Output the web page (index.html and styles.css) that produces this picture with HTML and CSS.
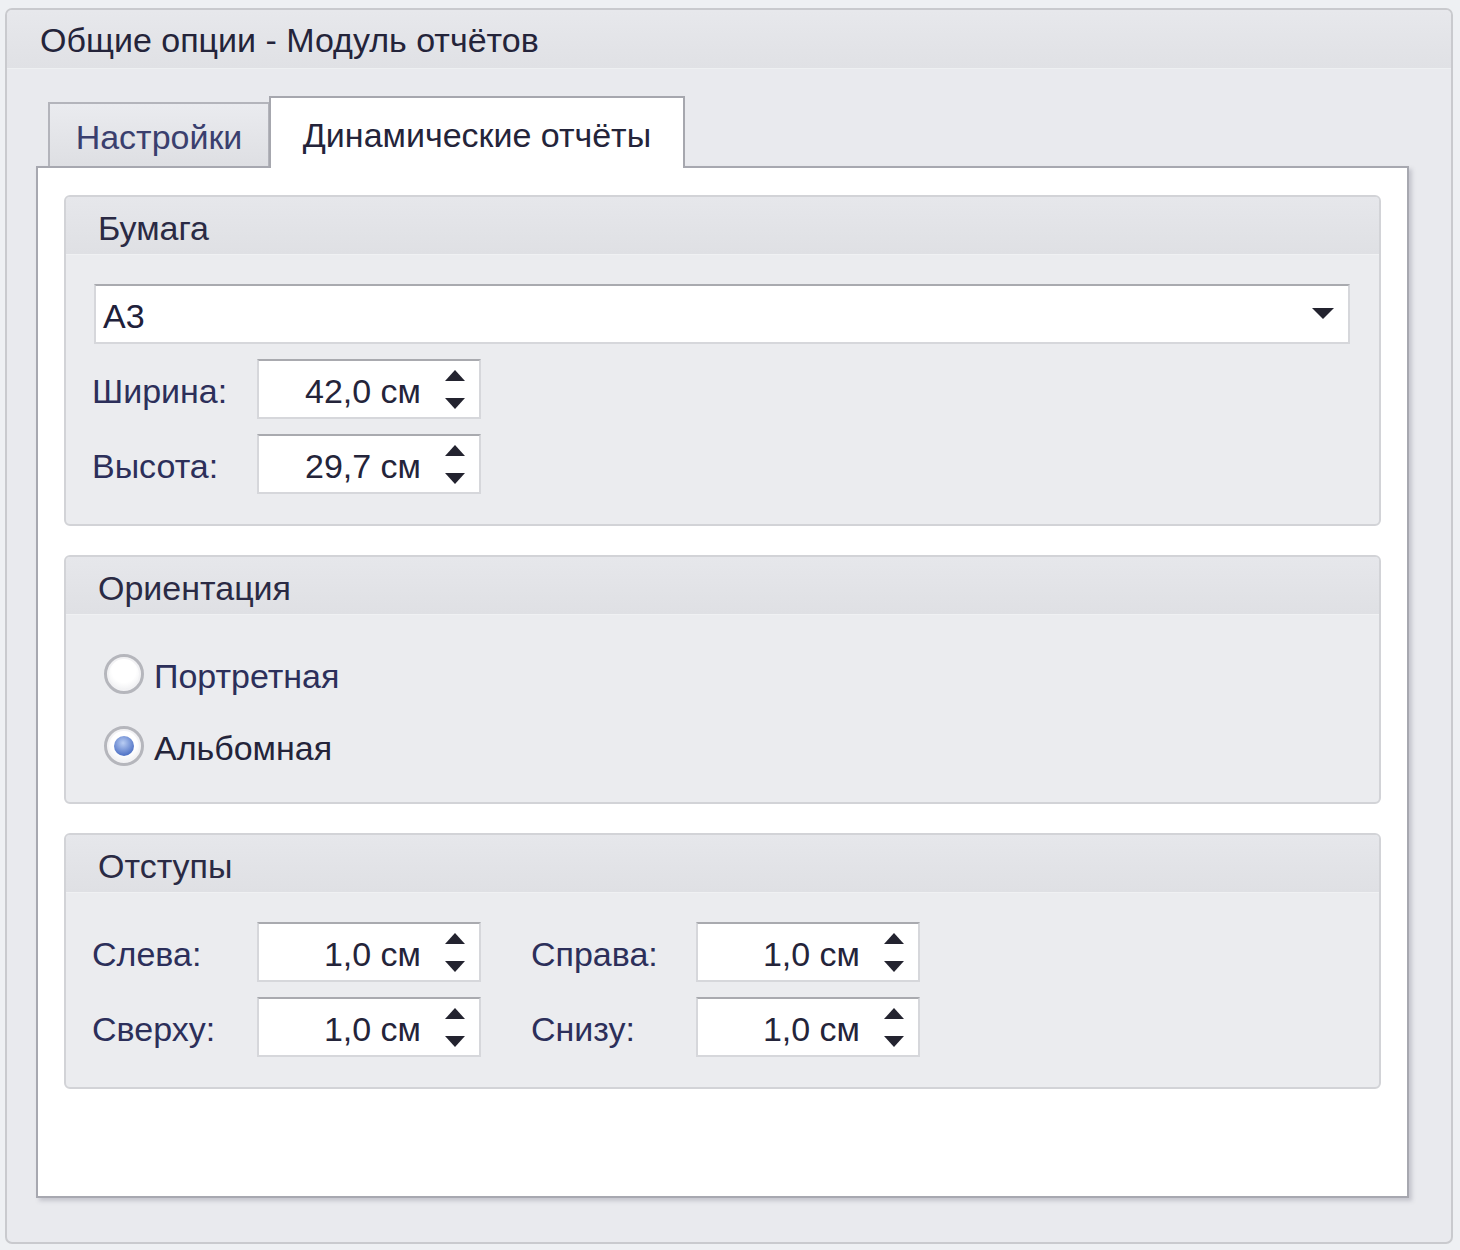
FILE: index.html
```html
<!DOCTYPE html>
<html lang="ru">
<head>
<meta charset="utf-8">
<title>Общие опции - Модуль отчётов</title>
<link rel="stylesheet" href="styles.css">
</head>
<body>
<div class="outer">
  <div class="outer-header"><span class="txt">Общие опции - Модуль отчётов</span></div>
  <div class="outer-body">
    <div class="tabs">
      <div class="tab"><span class="txt">Настройки</span></div>
      <div class="tab active"><span class="txt">Динамические отчёты</span></div>
    </div>
    <div class="page">
      <div class="group g-paper">
        <div class="group-header"><span class="txt">Бумага</span></div>
        <div class="group-body paper-body">
          <div class="combo">
            <span class="txt">A3</span>
            <svg class="combo-arrow" width="22" height="12" viewBox="0 0 22 12"><path d="M0 0 H22 L11 11 Z" fill="#23232f"/></svg>
          </div>
          <div class="field-row">
            <span class="label">Ширина:</span>
            <div class="spin"><span class="spin-val">42,0 см</span>
              <span class="spin-btns">
                <svg width="20" height="11" viewBox="0 0 20 11"><path d="M10 0 L20 11 H0 Z" fill="#23232f"/></svg>
                <svg width="20" height="11" viewBox="0 0 20 11"><path d="M0 0 H20 L10 11 Z" fill="#23232f"/></svg>
              </span>
            </div>
          </div>
          <div class="field-row">
            <span class="label">Высота:</span>
            <div class="spin"><span class="spin-val">29,7 см</span>
              <span class="spin-btns">
                <svg width="20" height="11" viewBox="0 0 20 11"><path d="M10 0 L20 11 H0 Z" fill="#23232f"/></svg>
                <svg width="20" height="11" viewBox="0 0 20 11"><path d="M0 0 H20 L10 11 Z" fill="#23232f"/></svg>
              </span>
            </div>
          </div>
        </div>
      </div>

      <div class="group g-orient">
        <div class="group-header"><span class="txt">Ориентация</span></div>
        <div class="group-body orient-body">
          <div class="radio-row"><span class="radio"></span><span class="txt">Портретная</span></div>
          <div class="radio-row"><span class="radio checked"><span class="dot"></span></span><span class="txt">Альбомная</span></div>
        </div>
      </div>

      <div class="group g-margins">
        <div class="group-header"><span class="txt">Отступы</span></div>
        <div class="group-body margins-body">
          <div class="field-row">
            <span class="label">Слева:</span>
            <div class="spin"><span class="spin-val">1,0 см</span>
              <span class="spin-btns">
                <svg width="20" height="11" viewBox="0 0 20 11"><path d="M10 0 L20 11 H0 Z" fill="#23232f"/></svg>
                <svg width="20" height="11" viewBox="0 0 20 11"><path d="M0 0 H20 L10 11 Z" fill="#23232f"/></svg>
              </span>
            </div>
            <span class="label label2">Справа:</span>
            <div class="spin"><span class="spin-val">1,0 см</span>
              <span class="spin-btns">
                <svg width="20" height="11" viewBox="0 0 20 11"><path d="M10 0 L20 11 H0 Z" fill="#23232f"/></svg>
                <svg width="20" height="11" viewBox="0 0 20 11"><path d="M0 0 H20 L10 11 Z" fill="#23232f"/></svg>
              </span>
            </div>
          </div>
          <div class="field-row">
            <span class="label">Сверху:</span>
            <div class="spin"><span class="spin-val">1,0 см</span>
              <span class="spin-btns">
                <svg width="20" height="11" viewBox="0 0 20 11"><path d="M10 0 L20 11 H0 Z" fill="#23232f"/></svg>
                <svg width="20" height="11" viewBox="0 0 20 11"><path d="M0 0 H20 L10 11 Z" fill="#23232f"/></svg>
              </span>
            </div>
            <span class="label label2">Снизу:</span>
            <div class="spin"><span class="spin-val">1,0 см</span>
              <span class="spin-btns">
                <svg width="20" height="11" viewBox="0 0 20 11"><path d="M10 0 L20 11 H0 Z" fill="#23232f"/></svg>
                <svg width="20" height="11" viewBox="0 0 20 11"><path d="M0 0 H20 L10 11 Z" fill="#23232f"/></svg>
              </span>
            </div>
          </div>
        </div>
      </div>
    </div>
  </div>
</div>
</body>
</html>
```

FILE: styles.css
```css
* { box-sizing: border-box; }

html, body {
  margin: 0;
  padding: 0;
  background: #eef0f3;
}

body {
  font-family: "Liberation Sans", Arial, sans-serif;
  font-size: 34px;
  color: #24243a;
  padding: 8px 0 0 5px;
}

.txt,
.label,
.spin-val {
  padding-top: 5px;
}

.outer {
  width: 1448px;
  height: 1236px;
  border: 2px solid #c9cace;
  border-radius: 7px;
  background: #e9eaee;
  overflow: hidden;
}

.outer-header {
  height: 59px;
  padding-left: 33px;
  display: flex;
  align-items: center;
  background: linear-gradient(#e7e8ec, #e0e1e5);
  border-bottom: 1px solid #eef0f2;
}

.outer-header .txt { padding-top: 2px; }

.outer-body {
  padding: 29px 0 0 29px;
}

.tabs {
  display: flex;
  align-items: flex-end;
  margin-left: 12px;
  height: 68px;
  position: relative;
  z-index: 1;
}

.tab {
  height: 64px;
  width: 222px;
  border: 2px solid #b3b4bb;
  border-bottom: none;
  background: linear-gradient(#eaebef, #dedfe3);
  color: #3a3f6e;
  display: flex;
  align-items: center;
  justify-content: center;
}

.tab.active {
  height: 72px;
  width: 416px;
  margin-bottom: -2px;
  margin-left: -1px;
  background: #ffffff;
  border-color: #a6a7ae;
  color: #24243a;
}

.page {
  width: 1373px;
  height: 1032px;
  background: #ffffff;
  border: 2px solid #a7a8b0;
  box-shadow: 3px 3px 4px rgba(90, 92, 110, 0.25);
  padding: 27px 0 0 26px;
  display: flex;
  flex-direction: column;
  gap: 29px;
}

.group {
  width: 1317px;
  border: 2px solid #d2d3d7;
  border-radius: 6px;
  background: #ebecef;
  overflow: hidden;
  flex: none;
}

.group-header {
  height: 58px;
  padding-left: 32px;
  display: flex;
  align-items: center;
  background: linear-gradient(#e6e7eb, #dfe0e4);
  border-bottom: 1px solid #f0f1f3;
  color: #2a2a44;
}

.g-paper { height: 331px; }
.g-orient { height: 249px; }
.g-margins { height: 256px; }

.paper-body {
  padding: 29px 0 0 28px;
  display: flex;
  flex-direction: column;
  gap: 15px;
}

.combo {
  width: 1256px;
  height: 60px;
  background: #ffffff;
  border: 2px solid #d6d7db;
  border-top-color: #a9aaaf;
  display: flex;
  align-items: center;
  justify-content: space-between;
  padding: 0 14px 0 7px;
  color: #20203a;
}

.combo-arrow { display: block; }

.field-row {
  display: flex;
  align-items: center;
  height: 60px;
  margin-left: -2px;
}

.label {
  width: 165px;
  color: #2c2f5a;
}

.label2 {
  margin-left: 50px;
}

.spin {
  width: 224px;
  height: 60px;
  background: #ffffff;
  border: 2px solid #d6d7db;
  border-top-color: #a9aaaf;
  display: flex;
  align-items: center;
  justify-content: flex-end;
  padding-right: 14px;
}

.spin-val {
  margin-right: 24px;
  color: #24243a;
}

.spin-btns {
  display: flex;
  flex-direction: column;
  gap: 17px;
}

.spin-btns svg { display: block; }

.orient-body {
  padding: 39px 0 0 38px;
  display: flex;
  flex-direction: column;
  gap: 32px;
}

.radio-row {
  display: flex;
  align-items: center;
  gap: 10px;
  height: 40px;
  color: #2c2f5a;
}

.radio-row:last-child { color: #24243a; }

.radio {
  width: 40px;
  height: 40px;
  border-radius: 50%;
  border: 3px solid #b5b6bc;
  background: radial-gradient(circle at 50% 40%, #ffffff 45%, #e3e4e8 100%);
  box-shadow: inset 0 0 0 2px #f2f2f4;
  display: flex;
  align-items: center;
  justify-content: center;
}

.radio .dot {
  width: 20px;
  height: 20px;
  border-radius: 50%;
  background: radial-gradient(circle at 45% 35%, #b9cdf3, #5577c8 70%, #3d5fb3);
}

.margins-body {
  padding: 29px 0 0 28px;
  display: flex;
  flex-direction: column;
  gap: 15px;
}
```
